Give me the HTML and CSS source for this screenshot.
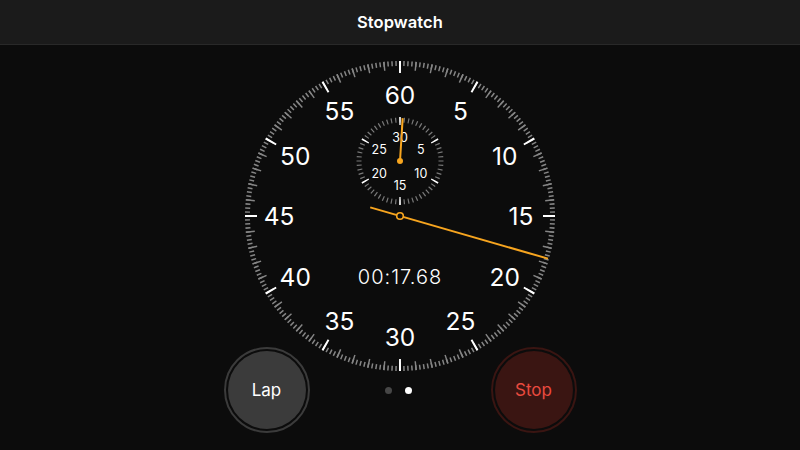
FILE: index.html
```html
<!DOCTYPE html>
<html lang="en">
<head>
<meta charset="utf-8">
<title>Stopwatch</title>
<link rel="stylesheet" href="styles.css">
</head>
<body>
<header class="navbar">
  <h1 class="navbar-title">Stopwatch</h1>
</header>
<main class="stage">
  <svg class="dial" viewBox="-160 -160 320 320" width="320" height="320" aria-label="Analog stopwatch">
    <!-- main dial ticks -->
    <circle class="tick tick-quarter" r="152.5" pathLength="360" transform="rotate(-90)"/>
    <circle class="tick tick-second" r="150.5" pathLength="360" transform="rotate(-90)"/>
    <circle class="tick tick-major" r="149" pathLength="360" transform="rotate(-90)"/>

    <!-- main dial labels -->
    <g class="dial-labels">
      <text x="0" y="-121">60</text>
      <text x="60.5" y="-104.8">5</text>
      <text x="104.8" y="-60.5">10</text>
      <text x="121" y="0">15</text>
      <text x="104.8" y="60.5">20</text>
      <text x="60.5" y="104.8">25</text>
      <text x="0" y="121">30</text>
      <text x="-60.5" y="104.8">35</text>
      <text x="-104.8" y="60.5">40</text>
      <text x="-121" y="0">45</text>
      <text x="-104.8" y="-60.5">50</text>
      <text x="-60.5" y="-104.8">55</text>
    </g>

    <!-- sub dial (minutes) -->
    <g transform="translate(0,-55)">
      <circle class="tick sub-tick" r="41" pathLength="360" transform="rotate(-90)"/>
      <circle class="tick sub-major" r="40" pathLength="360" transform="rotate(-90)"/>
      <g class="sub-labels">
        <text x="0" y="-24">30</text>
        <text x="20.8" y="-12">5</text>
        <text x="20.8" y="12">10</text>
        <text x="0" y="24">15</text>
        <text x="-20.8" y="12">20</text>
        <text x="-20.8" y="-12">25</text>
      </g>
      <line class="hand hand-sub" x1="0" y1="0" x2="2.65" y2="-42.9"/>
      <circle class="hand-dot" r="3"/>
    </g>

    <text class="readout" x="0" y="61">00:17.68</text>

    <!-- seconds hand -->
    <line class="hand hand-main" x1="-29.8" y1="-8.59" x2="148" y2="42.66"/>
    <circle class="hand-pivot" r="3.3"/>
  </svg>

  <div class="controls">
    <button class="round-btn btn-lap" type="button">Lap</button>
    <div class="pager">
      <span class="pager-dot"></span>
      <span class="pager-dot is-active"></span>
    </div>
    <button class="round-btn btn-stop" type="button">Stop</button>
  </div>
</main>
</body>
</html>
```
FILE: styles.css
```css
* { box-sizing: border-box; }

html, body {
  margin: 0;
  padding: 0;
}

body {
  width: 800px;
  height: 450px;
  overflow: hidden;
  background: #0c0c0c;
  font-family: Inter, "Noto Sans", "Liberation Sans", sans-serif;
  color: #fff;
}

.navbar {
  height: 45px;
  background: #1b1b1b;
  border-bottom: 1px solid #292929;
  display: flex;
  align-items: center;
  justify-content: center;
}

.navbar-title {
  margin: 0;
  font-size: 16.5px;
  font-weight: 600;
  letter-spacing: 0.1px;
  color: #fff;
}

.stage {
  display: grid;
  height: 405px;
}

.dial {
  grid-area: 1 / 1;
  justify-self: center;
  align-self: start;
  margin-top: 11px;
  display: block;
}

.tick {
  fill: none;
}

.tick-quarter {
  stroke: #858585;
  stroke-width: 5;
  stroke-dasharray: 0.56 0.94;
  stroke-dashoffset: 0.28;
}

.tick-second {
  stroke: #858585;
  stroke-width: 9;
  stroke-dasharray: 0.57 5.43;
  stroke-dashoffset: 0.285;
}

.tick-major {
  stroke: #ffffff;
  stroke-width: 12;
  stroke-dasharray: 0.77 29.23;
  stroke-dashoffset: 0.385;
}

.sub-tick {
  stroke: #7a7a7a;
  stroke-width: 5;
  stroke-dasharray: 1.68 4.32;
  stroke-dashoffset: 0.84;
}

.sub-major {
  stroke: #ffffff;
  stroke-width: 8;
  stroke-dasharray: 2.15 57.85;
  stroke-dashoffset: 1.075;
}

.dial-labels text,
.sub-labels text,
.readout {
  fill: #fff;
  text-anchor: middle;
  dominant-baseline: central;
  font-family: Inter, "Noto Sans", "Liberation Sans", sans-serif;
}

.dial-labels text {
  font-size: 24.5px;
  font-weight: 400;
}

.sub-labels text {
  font-size: 12.5px;
  font-weight: 400;
}

.readout {
  font-size: 20px;
  font-weight: 300;
  letter-spacing: 1px;
}

.hand {
  stroke: #f7a51f;
  stroke-linecap: butt;
}

.hand-main { stroke-width: 2; }
.hand-sub { stroke-width: 2; }

.hand-dot {
  fill: #f7a51f;
}

.hand-pivot {
  fill: #0c0c0c;
  stroke: #f7a51f;
  stroke-width: 1.6;
}

.controls {
  grid-area: 1 / 1;
  align-self: end;
  display: flex;
  justify-content: center;
  align-items: center;
  padding-bottom: 17px;
}

.round-btn {
  width: 86px;
  height: 86px;
  border-radius: 50%;
  padding: 2px;
  background-clip: content-box;
  font-family: Inter, "Noto Sans", "Liberation Sans", sans-serif;
  font-size: 17px;
  font-weight: 400;
  cursor: pointer;
}

.btn-lap {
  border: 2px solid #3b3b3b;
  background-color: #3b3b3b;
  color: #fff;
}

.btn-stop {
  border: 2px solid #3a1512;
  background-color: #3a1512;
  color: #ea4a3f;
}

.pager {
  width: 181px;
  display: flex;
  justify-content: center;
  gap: 13px;
  padding-right: 4px;
}

.pager-dot {
  width: 7px;
  height: 7px;
  border-radius: 50%;
  background: #474747;
}

.pager-dot.is-active {
  background: #fff;
}
```
